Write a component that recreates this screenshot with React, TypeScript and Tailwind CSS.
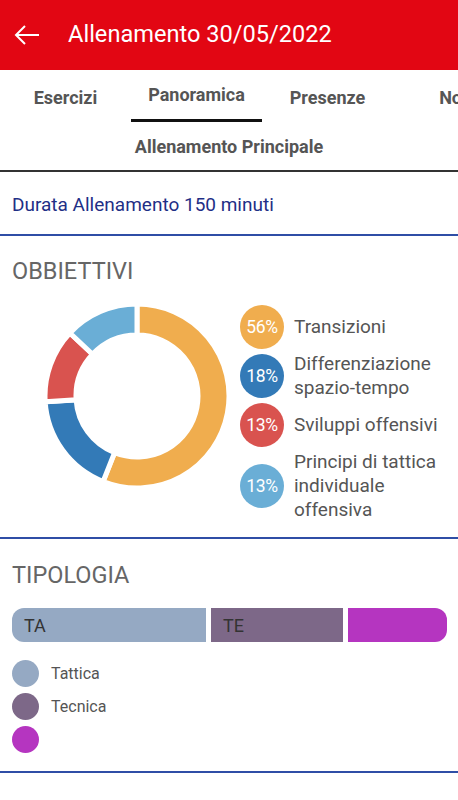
import React from "react";

const FONT = { fontFamily: "Roboto, 'Noto Sans', sans-serif" };

const goals = [
  { pct: 56, color: "#f0ad4e", label: ["Transizioni"] },
  { pct: 18, color: "#337ab7", label: ["Differenziazione", "spazio-tempo"] },
  { pct: 13, color: "#d9534f", label: ["Sviluppi offensivi"] },
  { pct: 13, color: "#6aaed6", label: ["Principi di tattica", "individuale", "offensiva"] },
];

function arcPath(cx: number, cy: number, r0: number, r1: number, a0: number, a1: number) {
  const p = (r: number, a: number) => {
    const rad = (a * Math.PI) / 180;
    return [cx + r * Math.sin(rad), cy - r * Math.cos(rad)];
  };
  const large = a1 - a0 > 180 ? 1 : 0;
  const [x0, y0] = p(r1, a0);
  const [x1, y1] = p(r1, a1);
  const [x2, y2] = p(r0, a1);
  const [x3, y3] = p(r0, a0);
  return `M${x0} ${y0} A${r1} ${r1} 0 ${large} 1 ${x1} ${y1} L${x2} ${y2} A${r0} ${r0} 0 ${large} 0 ${x3} ${y3} Z`;
}

function Donut() {
  let start = 0;
  return (
    <svg width="190" height="190" viewBox="0 0 190 190">
      {goals.map((g) => {
        const end = start + (g.pct / 100) * 360;
        const d = arcPath(95, 95, 61, 92, start, end);
        start = end;
        return <path key={g.color} d={d} fill={g.color} stroke="#fff" strokeWidth="5" />;
      })}
    </svg>
  );
}

const tabs = ["Esercizi", "Panoramica", "Presenze", "Note"];

export default function App() {
  return (
    <div className="w-[458px] h-[800px] overflow-hidden bg-white" style={FONT}>
      {/* Top bar */}
      <div className="h-[70px] bg-[#e20613] flex items-center px-[14px] gap-[28px]">
        <svg width="26" height="22" viewBox="0 0 26 22" fill="none" stroke="#fff" strokeWidth="2">
          <path d="M25 11H2M11 2L2 11l9 9" />
        </svg>
        <span className="text-white text-[23.6px] leading-none">Allenamento 30/05/2022</span>
      </div>

      {/* Tabs */}
      <div className="flex h-[52px] overflow-hidden">
        {tabs.map((t, i) => (
          <div key={t} className="w-[131px] shrink-0 flex flex-col items-center">
            <div className={`flex-1 flex items-center font-bold text-[18px] text-[#555] ${i === 1 ? "pb-[1px]" : "pt-[6px]"}`}>
              {t}
            </div>
            <div className={`h-[3px] w-full ${i === 1 ? "bg-[#111]" : ""}`} />
          </div>
        ))}
      </div>

      <div className="h-[50px] flex items-center justify-center font-bold text-[18px] text-[#555] border-b-2 border-[#333] pt-[1px]">
        Allenamento Principale
      </div>

      <div className="h-[64px] flex items-center px-[12px] pt-[4px] text-[19px] text-[#1f2f86] border-b-2 border-[#2f4ea6]">
        Durata Allenamento 150 minuti
      </div>

      {/* Obbiettivi */}
      <div className="border-b-2 border-[#2f4ea6] pb-[15px]">
        <div className="px-[12px] pt-[21px] text-[23.5px] text-[#666] leading-[28px]">OBBIETTIVI</div>
        <div className="flex pt-[10px]">
          <div className="w-[240px] pl-[42px] pt-[6px] shrink-0">
            <Donut />
          </div>
          <div className="flex flex-col gap-[3px] pt-[10px]">
            {goals.map((g, i) => (
              <div key={i} className="flex items-center gap-[10px]">
                <div
                  className="w-[44px] h-[44px] rounded-full flex items-center justify-center text-white text-[17.5px] tracking-[-0.3px] shrink-0"
                  style={{ background: g.color }}
                >
                  {g.pct}%
                </div>
                <div className="text-[19px] leading-[24px] text-[#555]">
                  {g.label.map((l) => (
                    <div key={l}>{l}</div>
                  ))}
                </div>
              </div>
            ))}
          </div>
        </div>
      </div>

      {/* Tipologia */}
      <div className="border-b-2 border-[#2f4ea6] px-[12px] pb-[18px]">
        <div className="pt-[22px] text-[23.5px] text-[#666] leading-[28px]">TIPOLOGIA</div>
        <div className="flex gap-[5px] h-[34px] mt-[19px] w-[435px]">
          <div className="w-[194px] bg-[#95a9c3] rounded-l-[12px] flex items-center pl-[12px] text-[18px] text-[#333]">TA</div>
          <div className="w-[132px] bg-[#7d6888] flex items-center pl-[12px] text-[18px] text-[#333]">TE</div>
          <div className="flex-1 bg-[#b535c0] rounded-r-[12px]" />
        </div>
        <div className="flex flex-col gap-[6px] mt-[18px]">
          {[
            ["#95a9c3", "Tattica"],
            ["#7d6888", "Tecnica"],
            ["#b535c0", ""],
          ].map(([c, l], i) => (
            <div key={i} className="flex items-center gap-[12px] h-[27px]">
              <div className="w-[27px] h-[27px] rounded-full" style={{ background: c }} />
              <span className="text-[16px] text-[#555]">{l}</span>
            </div>
          ))}
        </div>
      </div>
    </div>
  );
}
